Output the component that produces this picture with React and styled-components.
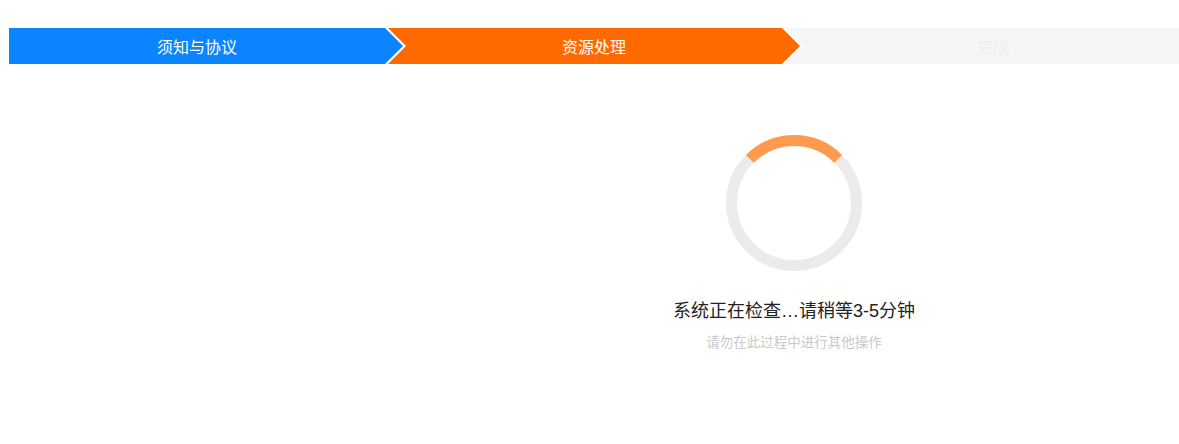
import React from 'react';
import styled, { createGlobalStyle } from 'styled-components';

const arrow = 18;

const GlobalStyle = createGlobalStyle`
  *, *::before, *::after {
    box-sizing: border-box;
  }
  body {
    margin: 0;
    background: #ffffff;
    font-family: "Liberation Sans", "Noto Sans CJK SC", sans-serif;
  }
`;

const stepColors = {
  done: { bg: '#0a84ff', fg: '#ffffff' },
  active: { bg: '#ff6a00', fg: '#ffffff' },
  todo: { bg: '#f5f6f8', fg: '#eceef2' },
};

const Page = styled.div`
  width: 1179px;
  height: 444px;
  overflow: hidden;
`;

const Steps = styled.div`
  display: flex;
  height: 36px;
  margin-top: 28px;
  padding-left: 9px;
`;

const Step = styled.div`
  flex: ${props => (props.width ? `0 0 ${props.width}px` : '1 1 auto')};
  margin-left: ${props => (props.first ? 0 : -15)}px;
  padding: 0 ${props => (props.first ? arrow : 0)}px 0 ${props => props.indent || 0}px;
  display: flex;
  align-items: center;
  justify-content: center;
  background: ${props => stepColors[props.status].bg};
  color: ${props => stepColors[props.status].fg};
  font-size: 16px;
  clip-path: ${props => {
    const notch = props.first ? '0 50%' : `${arrow}px 50%`;
    if (props.last) {
      return `polygon(0 0, 100% 0, 100% 100%, 0 100%, ${notch})`;
    }
    return `polygon(0 0, calc(100% - ${arrow}px) 0, 100% 50%, calc(100% - ${arrow}px) 100%, 0 100%, ${notch})`;
  }};
`;

const Body = styled.div`
  display: flex;
  flex-direction: column;
  align-items: center;
  padding-left: 409px;
  padding-top: 71px;
`;

const Spinner = styled.svg`
  display: block;
  width: 136px;
  height: 136px;
`;

const Title = styled.div`
  margin-top: 28px;
  font-size: 18px;
  line-height: 24px;
  color: #222;
`;

const Hint = styled.div`
  margin-top: 11px;
  font-size: 13.5px;
  line-height: 18px;
  color: #c9c9c9;
`;

const steps = [
  { label: '须知与协议', status: 'done', width: 394 },
  { label: '资源处理', status: 'active', width: 412 },
  { label: '完成', status: 'todo', indent: 22 },
];

// 90° arc sitting on top of the ring
const r = 62.5;
const c = 68;
const a = Math.PI / 4;
const arc = `M ${c - r * Math.sin(a)} ${c - r * Math.cos(a)} A ${r} ${r} 0 0 1 ${c + r * Math.sin(a)} ${c - r * Math.cos(a)}`;

export default function App() {
  return (
    <Page>
      <GlobalStyle />
      <Steps>
        {steps.map((s, i) => (
          <Step
            key={s.label}
            status={s.status}
            width={s.width}
            indent={s.indent}
            first={i === 0}
            last={i === steps.length - 1}
          >
            {s.label}
          </Step>
        ))}
      </Steps>
      <Body>
        <Spinner viewBox="0 0 136 136">
          <circle cx={c} cy={c} r={r} fill="none" stroke="#ebebeb" strokeWidth="11" />
          <path d={arc} fill="none" stroke="#ff9a4f" strokeWidth="11" />
        </Spinner>
        <Title>系统正在检查…请稍等3-5分钟</Title>
        <Hint>请勿在此过程中进行其他操作</Hint>
      </Body>
    </Page>
  );
}
